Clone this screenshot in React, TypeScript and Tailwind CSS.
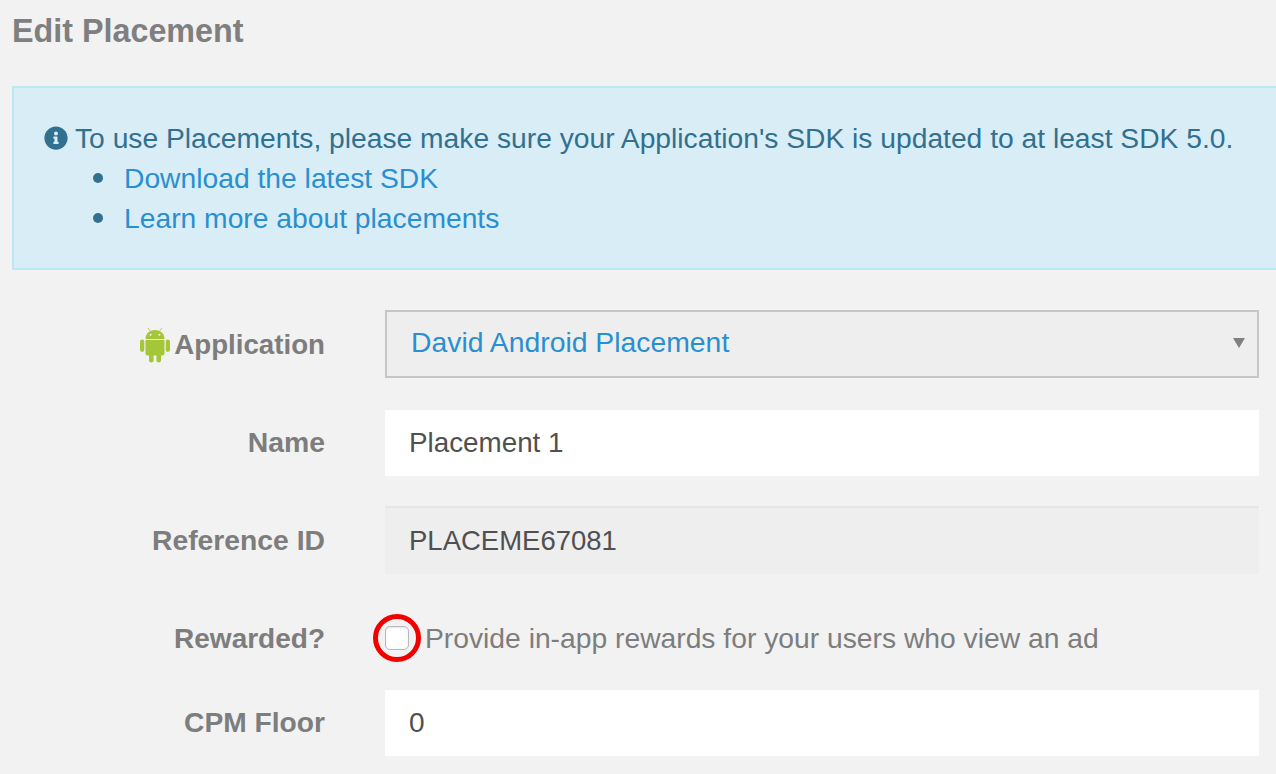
import { FaInfoCircle } from "react-icons/fa";

function Label({ children, nudge }: { children: React.ReactNode; nudge?: boolean }) {
  return (
    <div className={nudge ? "flex w-[313px] shrink-0 items-center justify-end pt-[2px] text-[28px] font-bold text-[#7d7d7d]" : "flex w-[313px] shrink-0 items-center justify-end text-[28px] font-bold text-[#7d7d7d]"}>
      {children}
    </div>
  );
}

function AndroidIcon() {
  return (
    <svg className="mr-[4px] h-[36px] w-[30px]" viewBox="0 0 30 36" fill="#a4c639">
      <path d="M8.2 1 L10.6 4.6 M21.8 1 L19.4 4.6" stroke="#a4c639" strokeWidth="0.8" />
      <path d="M5.5 12 C5.5 6.5 9.5 3 15 3 C20.5 3 24.5 6.5 24.5 12 Z" />
      <circle cx="10.6" cy="7.8" r="1" fill="#f2f2f2" />
      <circle cx="19.4" cy="7.8" r="1" fill="#f2f2f2" />
      <path d="M5.5 13 H24.5 V26.5 A2 2 0 0 1 22.5 28.5 H7.5 A2 2 0 0 1 5.5 26.5 Z" />
      <rect x="0" y="12.5" width="4.3" height="12.5" rx="2.15" />
      <rect x="25.7" y="12.5" width="4.3" height="12.5" rx="2.15" />
      <rect x="9" y="25" width="4.6" height="10.5" rx="2.3" />
      <rect x="16.4" y="25" width="4.6" height="10.5" rx="2.3" />
    </svg>
  );
}

function Bullet({ children }: { children: React.ReactNode }) {
  return (
    <div className="flex items-center pl-[49px]">
      <span className="h-[10px] w-[10px] shrink-0 rounded-full bg-[#31708f]" />
      <a className="ml-[21px] text-[28.25px] text-[#2a8fd0]">{children}</a>
    </div>
  );
}

export default function App() {
  return (
    <div className="h-[774px] overflow-hidden bg-[#f2f2f2] pl-3 font-['Liberation_Sans',Arial,sans-serif]">
      <h1 className="h-[86px] pt-[13px] text-[32.3px] leading-9 font-bold text-[#7f7f7f]">Edit Placement</h1>

      <div className="h-[184px] border-2 border-r-0 border-[#bce8f1] bg-[#d9edf7] pt-[30px] pl-[30px] leading-10 text-[#31708f]">
        <div className="flex items-center">
          <FaInfoCircle className="mr-[7px] h-6 w-6" />
          <span className="text-[28.22px]">To use Placements, please make sure your Application's SDK is updated to at least SDK 5.0.</span>
        </div>
        <Bullet>Download the latest SDK</Bullet>
        <Bullet>Learn more about placements</Bullet>
      </div>

      <div className="mt-10 flex w-[1247px] flex-col">
        <div className="flex h-[68px] gap-[60px]">
          <Label nudge>
            <AndroidIcon />
            <span className="text-[27.7px]">Application</span>
          </Label>
          <div className="flex flex-1 items-center justify-between border-2 border-[#c6c6c6] bg-[#eeeeee] pr-3 pb-[3px] pl-6 text-[28.35px] text-[#2a8fd0]">
            <span>David Android Placement</span>
            <svg className="h-[10px] w-3" viewBox="0 0 12 10"><path d="M0 0h12L6 10z" fill="#808080" /></svg>
          </div>
        </div>

        <div className="mt-8 flex h-[66px] gap-[60px]">
          <Label><span className="pb-[2px] text-[28.4px]">Name</span></Label>
          <div className="flex flex-1 items-center bg-white pl-6 text-[27.8px] text-[#505050]">Placement 1</div>
        </div>

        <div className="mt-[30px] flex h-[68px] gap-[60px]">
          <Label><span className="text-[28.3px]">Reference ID</span></Label>
          <div className="flex flex-1 items-center border-t-2 border-[#e6e6e6] bg-[#eeeeee] pl-6 text-[27.5px] text-[#505050]">PLACEME67081</div>
        </div>

        <div className="mt-10 flex h-12 gap-[60px]">
          <Label nudge>Rewarded?</Label>
          <div className="flex flex-1 items-center text-[#7d7d7d]">
            <div className="relative h-6 w-6 shrink-0 rounded-[5px] border border-[#b8b8b8] bg-white shadow-[inset_0_1px_2px_rgba(0,0,0,0.1)]">
              <div className="absolute -top-[13px] -left-[13px] h-12 w-12 rounded-full border-[5px] border-[#f20000]" />
            </div>
            <span className="ml-4 pt-[1px] text-[28.25px]">Provide in-app rewards for your users who view an ad</span>
          </div>
        </div>

        <div className="mt-7 flex h-[66px] gap-[60px]">
          <Label><span className="pb-[2px] text-[28.2px]">CPM Floor</span></Label>
          <div className="flex flex-1 items-center bg-white pl-6 text-[28px] text-[#505050]">0</div>
        </div>
      </div>
    </div>
  );
}
